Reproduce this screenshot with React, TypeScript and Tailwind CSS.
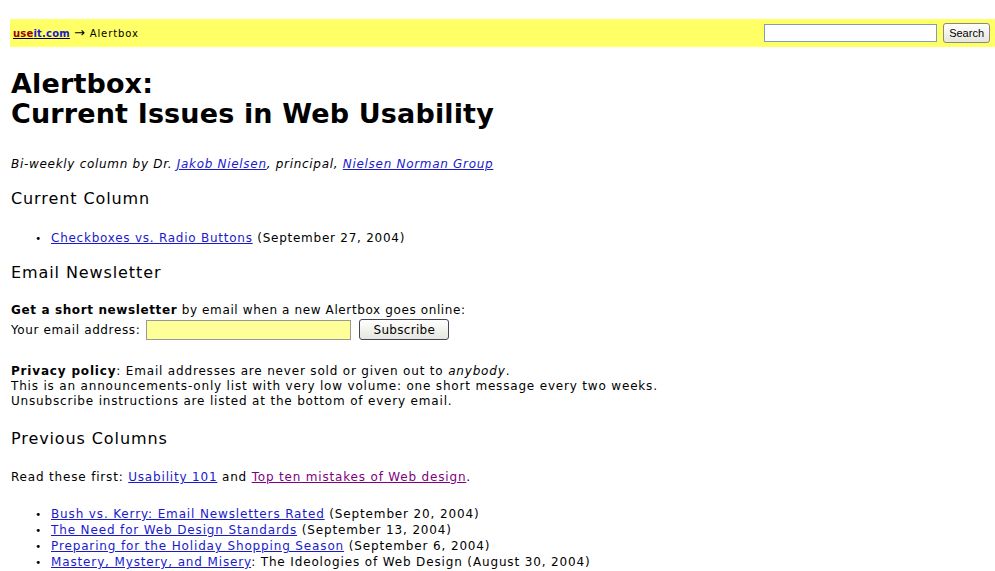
import React from "react";

const verdana = { fontFamily: '"DejaVu Sans", Verdana, sans-serif' };

const linkCls = "text-[#1a1acc] underline";
const visitedCls = "text-[#800080] underline";

const previous = [
  { title: "Bush vs. Kerry: Email Newsletters Rated", rest: " (September 20, 2004)" },
  { title: "The Need for Web Design Standards", rest: " (September 13, 2004)" },
  { title: "Preparing for the Holiday Shopping Season", rest: " (September 6, 2004)" },
  { title: "Mastery, Mystery, and Misery", rest: ": The Ideologies of Web Design (August 30, 2004)" },
];

function Bullet({ children }: { children: React.ReactNode }) {
  return (
    <li className="flex items-baseline leading-[16px] h-[16px]">
      <span className="w-[41px] shrink-0 text-right pr-[9px] text-[10px] leading-[16px]">•</span>
      <span>{children}</span>
    </li>
  );
}

export default function App() {
  return (
    <div className="w-[995px] h-[571px] overflow-hidden bg-white text-black" style={verdana}>
      <div className="pt-[19px] pl-[10px]">
        {/* breadcrumb + search strip */}
        <div className="flex items-center justify-between h-[28px] bg-[#ffff66] pl-[3px] pr-[5px]">
          <div className="text-[10px] tracking-[0.9px] flex items-center gap-[4px]">
            <a className="font-bold underline tracking-[0.2px]">
              <span className="text-[#990000]">use</span>
              <span className="text-[#1a1acc]">it.com</span>
            </a>
            <span className="text-[13px] leading-[10px]">→</span>
            <span>Alertbox</span>
          </div>
          <div className="flex items-center gap-[6px]">
            <input className="w-[173px] h-[18px] border border-[#7f9db9] bg-white" />
            <button className="h-[20px] px-[5px] text-[11px] border border-[#888] rounded-[3px] bg-gradient-to-b from-white to-[#e6e6de]" style={{ fontFamily: '"Liberation Sans", Arial, sans-serif' }}>
              Search
            </button>
          </div>
        </div>

        <h1 className="mt-[22px] text-[27px] font-bold leading-[30px] tracking-[0.15px] pl-[1px]">
          Alertbox:
          <br />
          Current Issues in Web Usability
        </h1>

        <p className="mt-[26px] text-[12px] tracking-[0.7px] italic pl-[1px]">
          Bi-weekly column by Dr. <a className={linkCls}>Jakob Nielsen</a>, principal,{" "}
          <a className={linkCls}>Nielsen Norman Group</a>
        </p>

        <h2 className="mt-[16px] text-[16px] tracking-[0.9px] leading-[20px] pl-[1px]">Current Column</h2>
        <ul className="mt-[21px] text-[12px] tracking-[0.75px]">
          <Bullet>
            <a className={linkCls}>Checkboxes vs. Radio Buttons</a> (September 27, 2004)
          </Bullet>
        </ul>

        <h2 className="mt-[17px] text-[16px] tracking-[0.9px] leading-[20px] pl-[1px]">Email Newsletter</h2>
        <div className="mt-[18px] text-[12px] tracking-[0.62px] pl-[1px]">
          <div>
            <b>Get a short newsletter</b> by email when a new Alertbox goes online:
          </div>
          <div className="flex items-center">
            <span>Your email address:</span>
            <input className="ml-[6px] w-[205px] h-[20px] border border-[#999] bg-[#ffff99]" />
            <button className="ml-[8px] w-[90px] h-[21px] text-[12px] tracking-[0.3px] border border-[#445] rounded-[3px] bg-gradient-to-b from-white to-[#e6e6de]">
              Subscribe
            </button>
          </div>
        </div>

        <div className="mt-[24px] text-[12px] tracking-[0.82px] leading-[15px] pl-[1px]">
          <div>
            <b>Privacy policy</b>: Email addresses are never sold or given out to <i>anybody</i>.
          </div>
          <div>This is an announcements-only list with very low volume: one short message every two weeks.</div>
          <div>Unsubscribe instructions are listed at the bottom of every email.</div>
        </div>

        <h2 className="mt-[20px] text-[16px] tracking-[0.9px] leading-[20px] pl-[1px]">Previous Columns</h2>
        <p className="mt-[19px] text-[12px] tracking-[0.82px] pl-[1px]">
          Read these first: <a className={linkCls}>Usability 101</a> and{" "}
          <a className={visitedCls}>Top ten mistakes of Web design</a>.
        </p>
        <ul className="mt-[20px] text-[12px] tracking-[0.86px]">
          {previous.map((p) => (
            <Bullet key={p.title}>
              <a className={linkCls}>{p.title}</a>
              {p.rest}
            </Bullet>
          ))}
        </ul>
      </div>
    </div>
  );
}
